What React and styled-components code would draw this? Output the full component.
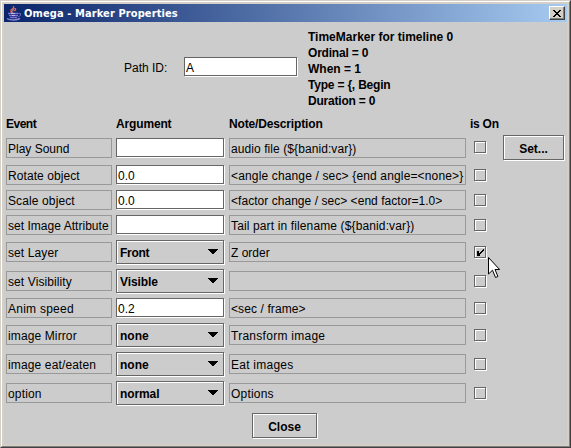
import React from 'react';
import styled, { createGlobalStyle, css } from 'styled-components';

const Global = createGlobalStyle`
  * { box-sizing: border-box; }
  body { margin: 0; overflow: hidden; background: #d4d0c8; }
`;

const flush3D = css`
  border: 1px solid #666;
  box-shadow: 1px 1px 0 #fff, inset 1px 1px 0 #fff;
`;

const Frame = styled.div`
  position: relative;
  width: 571px;
  height: 448px;
  background: #ccc;
  border: 1px solid;
  border-color: #d4d0c8 #404040 #404040 #d4d0c8;
  font: 12px/14px 'Liberation Sans', Arial, sans-serif;
  color: #000;
  cursor: default;
`;

const Bevel = styled.div`
  height: 446px;
  border: 1px solid;
  border-color: #fff #808080 #808080 #fff;
`;

const Inner = styled.div`
  display: flex;
  flex-direction: column;
  height: 444px;
  border: 2px solid #d4d0c8;
`;

const TitleBar = styled.div`
  display: flex;
  align-items: center;
  flex: none;
  height: 18px;
  padding: 0 2px;
  background: linear-gradient(90deg, #0a246a, #a6caf0);
  color: #fff;
`;

const Title = styled.span`
  flex: 1;
  margin-left: 2px;
  font: bold 11px/17px 'DejaVu Sans Condensed', 'DejaVu Sans', sans-serif;
  font-stretch: condensed;
  letter-spacing: 0.1px;
  white-space: pre;
`;

const WindowClose = styled.button`
  display: flex;
  align-items: center;
  justify-content: center;
  width: 16px;
  height: 14px;
  padding: 0;
  border: 1px solid;
  border-color: #fff #404040 #404040 #fff;
  box-shadow: inset -1px -1px 0 #808080;
  background: #d4d0c8;
`;

const Summary = styled.div`
  display: flex;
  height: 95px;
  padding: 7px 0 0 120px;
`;

const PathLabel = styled.label`
  width: 60px;
  padding-top: 32px;
  white-space: pre;
`;

const TextBox = styled.div`
  ${flush3D}
  flex: none;
  width: ${(p) => p.$width - 1}px;
  height: 19px;
  margin-top: ${(p) => p.$top || 0}px;
  padding: 3px 0 0 1px;
  background: #fff;
  white-space: pre;
`;

const Info = styled.div`
  display: flex;
  flex-direction: column;
  margin-left: 11px;
  font-weight: bold;
  line-height: 16px;
  white-space: pre;
`;

const columns = css`
  display: grid;
  grid-template-columns: 106px 109px 237px 29px 62px;
  column-gap: 4px;
  padding-left: 2px;
`;

const Header = styled.div`
  ${columns}
  height: 18px;
  font-weight: bold;
  white-space: pre;
`;

const Table = styled.div`
  display: flex;
  flex-direction: column;
  gap: 4px;
`;

const Row = styled.div`
  ${columns}
  align-items: start;
  height: ${(p) => p.$height}px;
`;

const Cell = styled.div`
  height: 20px;
  margin-top: ${(p) => p.$top}px;
  padding: 3px 0 0 1px;
  border: 1px solid #999;
  white-space: pre;
`;

const Spaced = styled.span`
  letter-spacing: ${(p) => p.$ls || 0}px;
`;

const Combo = styled.div`
  ${flush3D}
  display: flex;
  justify-content: space-between;
  width: 108px;
  height: 24px;
  padding: 5px 5px 0 3px;
  font-weight: bold;
`;

const Arrow = styled.svg`
  display: block;
  margin-top: 3px;
`;

const CheckBox = styled.div`
  ${flush3D}
  width: 12px;
  height: 12px;
  margin: ${(p) => p.$top}px 0 0 4px;

  svg { display: block; margin: -1px; }
`;

const Button = styled.button`
  ${flush3D}
  width: ${(p) => p.$width - 1}px;
  height: 25px;
  padding: 3px 0 0;
  background: #ccc;
  color: #000;
  font: bold 12px/14px 'Liberation Sans', Arial, sans-serif;
`;

const Footer = styled.div`
  display: flex;
  padding: 7px 0 0 248px;
`;

const Pointer = styled.svg`
  position: absolute;
  left: 487px;
  top: 256px;
`;

const JavaIcon = () => (
  <svg width="16" height="16" viewBox="0 0 16 16" fill="none">
    <path d="M7.5 1v2L5 5v2l2 1M9.5 3v2l-2 1" stroke="#e8604c" strokeWidth="1.3" />
    <path d="M6 7.5V5.5L8.5 3.5" stroke="#ffc0a8" strokeWidth=".7" />
    <path d="M2 8.5h10M3 10.5h9M4 12.5h7" stroke="#7674cc" strokeWidth="1.3" />
    <path d="M3 9.5h9M4 11.5h7" stroke="#3c3a96" />
    <path d="M5 8.5h4M6 10.5h3" stroke="#b9b8ee" />
    <path d="M12 8.5h2.5v2L12 12" stroke="#6563bd" />
    <path d="M1 13.5c3 2 9 2 13 0" stroke="#8583d4" strokeWidth="1.5" />
  </svg>
);

const rows = [
  { name: 'Play Sound', field: '', note: 'audio file (${banid:var})', nls: 0.08, h: 26, top: 3, box: 6, button: true },
  { name: 'Rotate object', ls: 0.08, field: '0.0', note: '<angle change / sec> {end angle=<none>}', nls: 0.15 },
  { name: 'Scale object', ls: 0.12, field: '0.0', note: '<factor change / sec> <end factor=1.0>', nls: 0.04 },
  { name: 'set Image Attribute', ls: 0.03, field: '', note: 'Tail part in filename (${banid:var})', nls: 0.13 },
  { name: 'set Layer', ls: 0.1, combo: 'Front', cls: -0.3, note: 'Z order', on: true },
  { name: 'set Visibility', ls: 0.1, combo: 'Visible', cls: -0.1, note: '' },
  { name: 'Anim speed', ls: 0.25, field: '0.2', note: '<sec / frame>', nls: 0.1 },
  { name: 'image Mirror', ls: 0.12, combo: 'none', note: 'Transform image', nls: 0.27 },
  { name: 'image eat/eaten', ls: 0.14, combo: 'none', note: 'Eat images', nls: 0.25 },
  { name: 'option', ls: 0.15, combo: 'normal', cls: -0.1, note: 'Options', nls: 0.2 },
];

function EventRow({ row }) {
  const height = row.h || (row.combo ? 25 : 21);
  const top = row.top ?? (row.combo ? 2 : 0);
  const box = row.box ?? top + 4;
  return (
    <Row $height={height}>
      <Cell $top={top}><Spaced $ls={row.ls}>{row.name}</Spaced></Cell>
      {row.combo ? (
        <Combo>
          <Spaced $ls={row.cls}>{row.combo}</Spaced>
          <Arrow width="10" height="5" shapeRendering="crispEdges">
            <path d="M0 0h10v1H0zM1 1h8v1H1zM2 2h6v1H2zM3 3h4v1H3zM4 4h2v1H4z" />
          </Arrow>
        </Combo>
      ) : (
        <TextBox $width={109} $top={top}>{row.field}</TextBox>
      )}
      <Cell $top={top}><Spaced $ls={row.nls}>{row.note}</Spaced></Cell>
      <CheckBox $top={box}>
        {row.on && (
          <svg width="12" height="12" shapeRendering="crispEdges">
            <path d="M3 5h2v5H3zM5 7h1v3H5zM6 6h1v2H6zM7 5h1v2H7zM8 4h1v2H8zM9 3h1v2H9z" />
          </svg>
        )}
      </CheckBox>
      {row.button && <Button $width={62}>Set...</Button>}
    </Row>
  );
}

export default function App() {
  return (
    <Frame>
      <Global />
      <Bevel>
        <Inner>
          <TitleBar>
            <JavaIcon />
            <Title>Omega - Marker Properties</Title>
            <WindowClose aria-label="Close window">
              <svg width="8" height="7" shapeRendering="crispEdges">
                <path d="M0 0h2v1H0zM6 0h2v1H6zM1 1h2v1H1zM5 1h2v1H5zM2 2h4v1H2zM3 3h2v1H3zM2 4h4v1H2zM1 5h2v1H1zM5 5h2v1H5zM0 6h2v1H0zM6 6h2v1H6z" />
              </svg>
            </WindowClose>
          </TitleBar>
          <Summary>
            <PathLabel>Path ID:</PathLabel>
            <TextBox $width={114} $top={28}>A</TextBox>
            <Info>
              <Spaced>TimeMarker for timeline 0</Spaced>
              <Spaced $ls={-0.2}>Ordinal = 0</Spaced>
              <Spaced>When = 1</Spaced>
              <Spaced $ls={-0.2}>{'Type = {, Begin'}</Spaced>
              <Spaced $ls={-0.2}>Duration = 0</Spaced>
            </Info>
          </Summary>
          <Header>
            <Spaced $ls={-0.5}>Event</Spaced>
            <Spaced $ls={-0.15}>Argument</Spaced>
            <Spaced $ls={-0.15}>Note/Description</Spaced>
            <Spaced $ls={-0.25}>is On</Spaced>
          </Header>
          <Table>
            {rows.map((row) => <EventRow key={row.name} row={row} />)}
          </Table>
          <Footer><Button $width={66}>Close</Button></Footer>
        </Inner>
      </Bevel>
      <Pointer width="13" height="22" viewBox="0 0 13 22">
        <path d="M.5 .5v16.5l4-3.8 3 7.3 2.4-1-2.9-7h4.6z" fill="#fff" stroke="#000" />
      </Pointer>
    </Frame>
  );
}
